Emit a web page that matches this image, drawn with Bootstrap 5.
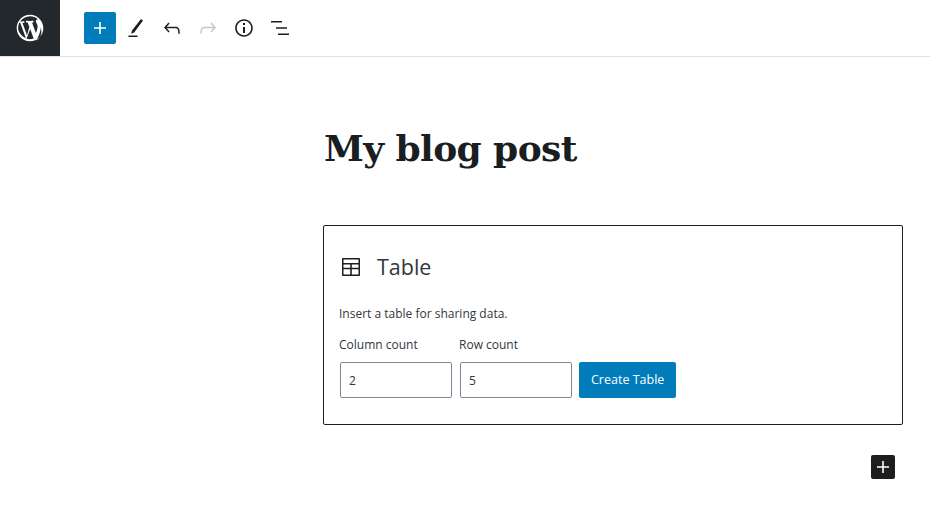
<!DOCTYPE html>
<html lang="en">
<head>
    <meta charset="UTF-8">
    <meta name="viewport" content="width=device-width, initial-scale=1">
    <title>My blog post</title>
    <link rel="stylesheet" href="https://cdn.jsdelivr.net/npm/bootstrap@5.3.3/dist/css/bootstrap.min.css">
    <style>
        body { font-family: "Open Sans", "Noto Sans", sans-serif; color: #1e1e1e; background: #fff; overflow: hidden; }
        .editor-bar { height: 57px; border-bottom: 1px solid #e0e0e0; }
        .wp-logo { width: 60px; height: 56px; background: #23282d; }
        .tool-list { padding-left: 24px; gap: 4px; }
        .tool-btn { width: 32px; height: 32px; padding: 0; border: 0; background: none; border-radius: 2px; }
        .tool-add { background: #007cba; }
        .canvas-col { width: 580px; margin-left: 323px; }
        .post-title { font-family: "DejaVu Serif", "Liberation Serif", serif; font-weight: 700; font-size: 36px; line-height: 48px; color: #191e23; letter-spacing: -.6px; margin: 67px 0 53px 1px; }
        .table-block { height: 200px; border: 1px solid #1e1e1e; border-radius: 2px; padding: 27px 15px 0; }
        .block-label { font-size: 21.5px; line-height: 28px; font-weight: 400; color: #32373c; margin: 0 0 24px; gap: 14px; }
        .block-help { font-size: 12px; line-height: 18px; margin: 0 0 13px; color: #32373c; }
        .count-field { width: 112px; margin-left: 1px; margin-right: 7px; }
        .count-label { font-size: 12px; line-height: 18px; margin: 0 0 8px -1px; color: #32373c; }
        .count-input { height: 36px; padding: 0 8px; font-size: 12px; border: 1px solid #7e8993; border-radius: 2px; color: #32373c; }
        .create-btn { height: 36px; padding: 0 12px; font-size: 12.5px; background: #007cba; border: 0; border-radius: 2px; color: #fff; margin-left: 0; white-space: nowrap; }
        .append-btn { width: 24px; height: 24px; padding: 0; border: 0; background: #1e1e1e; border-radius: 2px; margin: 30px 8px 0 auto; }
    </style>
</head>
<body>
    <header class="editor-bar d-flex align-items-start">
        <a class="wp-logo d-flex align-items-center justify-content-center" href="#" aria-label="WordPress">
            <svg width="32" height="32" viewBox="-2 -2 24 24" fill="#fff"><path d="M20 10c0-5.51-4.49-10-10-10C4.480 0 0 4.490 0 10c0 5.520 4.480 10 10 10 5.510 0 10-4.480 10-10zM7.780 15.370L4.370 6.220c.55-.02 1.170-.08 1.170-.08.50-.06.440-1.130-.06-1.110 0 0-1.450.11-2.370.11-.18 0-.37 0-.58-.01C4.120 2.690 6.900 1.100 10 1.100c2.310 0 4.410.87 5.990 2.330-.67-.11-1.630.39-1.630 1.560 0 .65.39 1.200.81 1.870.33.570.52 1.280.52 2.300 0 1.380-1.300 4.630-1.300 4.630l-2.810-7.750c.5-.03.78-.17.78-.17.5-.05.44-1.250-.06-1.220 0 0-1.530.12-2.510.12-.91 0-2.450-.12-2.450-.12-.5-.03-.56 1.200-.06 1.220l.97.09 1.210 3.350zm8.890 .12c.73-1.910 1.190-3.430 1.190-4.530 0-.58-.07-1.110-.17-1.610 1.160 2.090 1.100 4.440.2 6.480-.66 1.490-1.770 2.730-3.190 3.560zM2.680 6.080L6.940 17.760C3.960 16.320 1.110 13.300 1.100 10c0-1.410.31-2.740.87-3.920zm7.470 4.720l2.610 7.120c-1.730.55-3.570.58-5.320.08z"/></svg>
        </a>
        <div class="tool-list d-flex align-items-center pt-2 mt-1" style="padding-top:10px">
            <button class="tool-btn tool-add d-flex align-items-center justify-content-center" type="button" aria-label="Add block">
                <svg width="24" height="24" viewBox="0 0 24 24" fill="#fff"><path d="M18 11.200h-5.200V6h-1.600v5.200H6v1.600h5.200V18h1.600v-5.200H18z"/></svg>
            </button>
            <button class="tool-btn d-flex align-items-center justify-content-center" type="button" aria-label="Edit">
                <svg width="24" height="24" viewBox="0 0 24 24" fill="#1e1e1e"><path d="M19 4.500l-2-1.500-9 11.500-.8 3.300 3-1.300zM4.500 19.500h9V21h-9z"/></svg>
            </button>
            <button class="tool-btn d-flex align-items-center justify-content-center" type="button" aria-label="Undo">
                <svg width="24" height="24" viewBox="0 0 24 24" fill="#1e1e1e"><path d="M18.300 11.700c-.6-.6-1.400-.9-2.300-.9H6.700l2.900-3.300-1.100-1-4.500 5L8.500 16.500l1.100-1-2.900-3.200H16c.5 0 .9.200 1.300.5 1 1 1 3.400 1 4.500v.5h1.500v-.5c0-1.500 0-4.300-1.500-5.600z"/></svg>
            </button>
            <button class="tool-btn d-flex align-items-center justify-content-center" type="button" aria-label="Redo">
                <svg width="24" height="24" viewBox="0 0 24 24" fill="#c8c8c8"><path d="M15.600 6.500l-1.100 1 2.900 3.300H8c-.9 0-1.700.3-2.300.9-1.400 1.500-1.400 4.200-1.400 5.600v.2h1.500v-.3c0-1.100 0-3.500 1-4.500.3-.3.700-.5 1.300-.5h9.200L14.500 15.500l1.100 1.100 4.500-5z"/></svg>
            </button>
            <button class="tool-btn d-flex align-items-center justify-content-center" type="button" aria-label="Details">
                <svg width="24" height="24" viewBox="0 0 24 24" fill="#1e1e1e"><path d="M12 3.200c-4.800 0-8.800 3.900-8.800 8.800 0 4.800 3.900 8.800 8.800 8.800 4.800 0 8.800-3.900 8.800-8.800 0-4.800-4-8.800-8.800-8.800zm0 16c-4 0-7.200-3.300-7.200-7.200C4.800 8 8 4.800 12 4.800s7.200 3.300 7.200 7.200c0 4-3.200 7.200-7.200 7.200zM11 17h2v-6h-2v6zm0-8h2V7h-2v2z"/></svg>
            </button>
            <button class="tool-btn d-flex align-items-center justify-content-center" type="button" aria-label="Outline">
                <svg width="24" height="24" viewBox="0 0 24 24" fill="#1e1e1e"><path d="M3 5h11v1.500H3zM8 11.200h11v1.500H8zM10 17.500h11V19H10z"/></svg>
            </button>
        </div>
    </header>
    <main class="canvas-col">
        <h1 class="post-title">My blog post</h1>
        <section class="table-block">
            <h2 class="block-label d-flex align-items-center">
                <svg width="24" height="24" viewBox="0 0 24 24" fill="#1e1e1e"><path d="M20 3H4c-.6 0-1 .4-1 1v16c0 .6.4 1 1 1h16c.6 0 1-.4 1-1V4c0-.6-.4-1-1-1zM4.500 4.500h15V8h-15zm0 5h6.700v3.200H4.500zm0 4.800h6.700v5.200H4.500zm8.300 5.200v-5.200h6.700v5.200zm6.700-6.800h-6.700V9.500h6.700z"/></svg>
                <span>Table</span>
            </h2>
            <p class="block-help">Insert a table for sharing data.</p>
            <form class="d-flex align-items-end">
                <div class="count-field">
                    <label class="count-label d-block" for="colCount">Column count</label>
                    <input class="form-control count-input" id="colCount" type="number" value="2">
                </div>
                <div class="count-field">
                    <label class="count-label d-block" for="rowCount">Row count</label>
                    <input class="form-control count-input" id="rowCount" type="number" value="5">
                </div>
                <button class="btn create-btn" type="button">Create Table</button>
            </form>
        </section>
        <div class="d-flex">
            <button class="append-btn d-flex align-items-center justify-content-center" type="button" aria-label="Add block">
                <svg width="24" height="24" viewBox="0 0 24 24" fill="#fff"><path d="M18 11.200h-5.200V6h-1.600v5.200H6v1.600h5.200V18h1.600v-5.200H18z"/></svg>
            </button>
        </div>
    </main>
    <script src="https://cdn.jsdelivr.net/npm/bootstrap@5.3.3/dist/js/bootstrap.bundle.min.js"></script>
</body>
</html>
